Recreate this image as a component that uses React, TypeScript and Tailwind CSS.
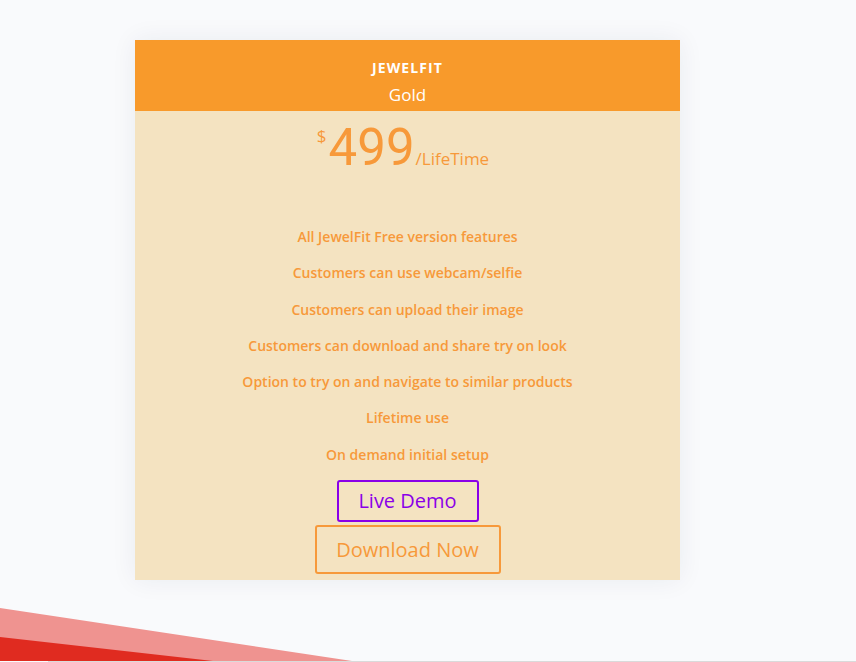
import React from 'react';

const features = [
  'All JewelFit Free version features',
  'Customers can use webcam/selfie',
  'Customers can upload their image',
  'Customers can download and share try on look',
  'Option to try on and navigate to similar products',
  'Lifetime use',
  'On demand initial setup',
];

const PricingCard: React.FC = () => {
  return (
    <div className="w-[545px] bg-[#f4e3c1] shadow-[0_0_24px_rgba(30,40,80,0.07)]">
      {/* header */}
      <div className="flex h-[71px] flex-col items-center bg-[#f89a2b] pt-[18px] text-white">
        <div className="h-5 text-[14px] font-bold leading-5 tracking-[0.08em]">JEWELFIT</div>
        <div className="mt-[5px] text-[17px] leading-6">Gold</div>
      </div>

      {/* price */}
      <div className="mt-[12px] flex justify-center pr-[9px] text-[#f7993a]">
        <span className="mt-[3px] self-start text-[17px] font-medium leading-5">$</span>
        <div className="flex items-baseline">
          <span className="ml-[2px] font-['Roboto',sans-serif] text-[51px] font-normal leading-[50px]">
            499
          </span>
          <span className="ml-[1px] text-[17px] font-medium">/LifeTime</span>
        </div>
      </div>

      {/* features */}
      <ul className="mt-[46px] flex flex-col items-center text-[14px] font-semibold text-[#f7993a]">
        {features.map((f) => (
          <li key={f} className="leading-[36.3px]">
            {f}
          </li>
        ))}
      </ul>

      {/* buttons */}
      <div className="mt-[7px] flex flex-col items-center pb-[6px]">
        <button
          type="button"
          className="h-[42px] w-[142px] rounded-[3px] border-2 border-[#8a00e8] text-[20px] text-[#8a00e8]"
        >
          Live Demo
        </button>
        <button
          type="button"
          className="mt-[3px] h-[49px] w-[186px] rounded-[3px] border-2 border-[#f7993a] text-[20px] text-[#f7993a]"
        >
          Download Now
        </button>
      </div>
    </div>
  );
};

const App: React.FC = () => {
  return (
    <div className="relative min-h-[662px] overflow-hidden bg-[#f9fafc] font-['Open_Sans',sans-serif]">
      <div className="flex pl-[135px] pt-[40px]">
        <PricingCard />
      </div>

      {/* decorative slopes */}
      <svg
        className="absolute bottom-0 left-0"
        width="360"
        height="54"
        viewBox="0 0 360 54"
      >
        <polygon points="0,0 352,53 0,53" fill="#ef9390" />
        <polygon points="0,29 213,53 0,53" fill="#e02b20" />
      </svg>
      <div className="absolute bottom-0 left-[48px] right-0 h-px bg-[#dadada]" />
    </div>
  );
};

export default App;
